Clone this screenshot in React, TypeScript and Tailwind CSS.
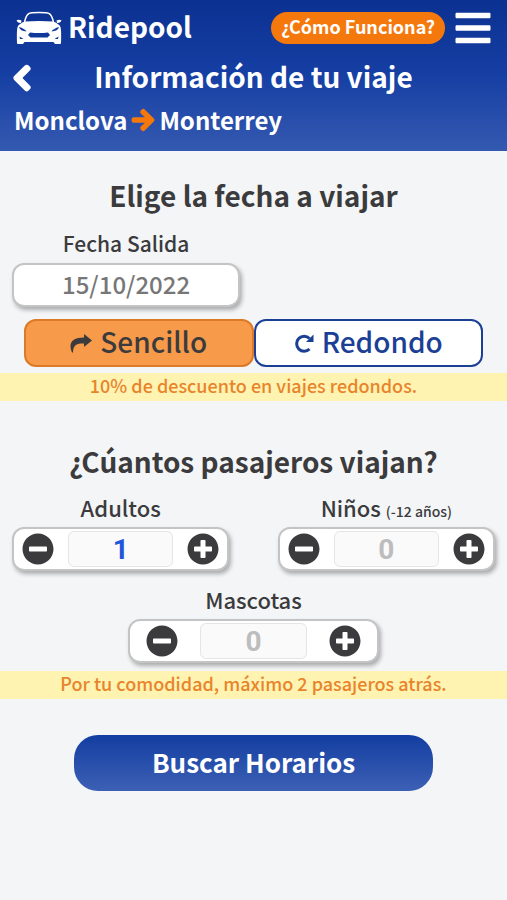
import { useState } from "react";
import { FaArrowRight, FaBars, FaChevronLeft, FaMinusCircle, FaPlusCircle } from "react-icons/fa";

function CarLogo() {
    return (
        <svg viewBox="0 0 46 34" className="h-[34px] w-[46px] shrink-0" fill="none" aria-hidden="true">
            <path d="M8.500 11.500 Q10 4 13 2.500 Q14 1.500 23 1.500 Q32 1.500 33 2.500 Q36 4 37.500 11.500" stroke="#fff" strokeWidth="1.500" />
            <path d="M0.500 9.500 Q2 8 5.500 9.500 L5 12 Q1.500 12 0.500 9.500Z M45.500 9.500 Q44 8 40.500 9.500 L41 12 Q44.500 12 45.500 9.500Z" fill="#fff" />
            <path
                fill="#fff"
                fillRule="evenodd"
                d="M9 10.500 Q23 9.500 37 10.500 Q43 12.500 44.500 16 Q45.500 20 45 32 Q45 33 44 33 H39 L37.500 31 H8.500 L7 33 H2 Q1 33 1 32 Q0.500 20 1.500 16 Q3 12.500 9 10.500Z M3 16 Q4 20 10.500 20.500 Q8.500 17.500 3 16Z M43 16 Q42 20 35.500 20.500 Q37.500 17.500 43 16Z M14 21.500 Q23 22.500 32 21.500 L34 24 L31.500 26.500 H14.500 L12 24Z M3.500 25.500 L4 28 H7.500Z M42.500 25.500 L42 28 H38.500Z"
            />
        </svg>
    );
}

function ShareArrow() {
    return (
        <svg viewBox="0 0 22 20" className="h-5 w-[22px]" fill="currentColor" aria-hidden="true">
            <path d="M14 1 L22 7.500 L14 14 V10.500 C7 10 3 12 3 19.500 H2 C-2 10 2 4.500 14 4.500Z" />
        </svg>
    );
}

function RoundTripArrow() {
    return (
        <svg viewBox="0 0 20 20" className="size-5" fill="none" aria-hidden="true">
            <path d="M15.500 16 A7.500 7.500 0 1 1 15.500 5.500" stroke="currentColor" strokeWidth="3" />
            <path d="M19.500 1.500 V9 H12Z" fill="currentColor" />
        </svg>
    );
}

type CounterProps = {
    id: string;
    label: string;
    note?: string;
    value: number;
    onChange: (value: number) => void;
    wide?: boolean;
};

function Counter({ id, label, note, value, onChange, wide }: CounterProps) {
    return (
        <div className={wide ? "w-[52%]" : "w-[45%]"}>
            <label htmlFor={id} className="mb-1 block text-center text-[22px] leading-8 font-medium">
                {label} {note && <span className="text-sm">{note}</span>}
            </label>
            <div
                className={`flex h-11 items-center justify-between rounded-xl border-2 border-[#c4c4c4] bg-white shadow-[2px_3px_4px_#0000004d] ${
                    wide ? "px-4" : "px-2"
                }`}
            >
                <button type="button" aria-label={`Quitar ${label}`} onClick={() => onChange(Math.max(0, value - 1))}>
                    <FaMinusCircle className="size-8" />
                </button>
                <input
                    id={id}
                    type="text"
                    inputMode="numeric"
                    value={value}
                    onChange={(e) => onChange(Number(e.target.value) || 0)}
                    className={`h-9 rounded-md border border-[#e5e5e5] bg-[#fafafa] text-center font-[Roboto,sans-serif] text-[28px] leading-8 font-bold ${
                        wide ? "w-1/2" : "w-[53%]"
                    } ${value > 0 ? "text-[#1f57dc]" : "text-[#bdbdbd]"}`}
                />
                <button type="button" aria-label={`Agregar ${label}`} onClick={() => onChange(value + 1)}>
                    <FaPlusCircle className="size-8" />
                </button>
            </div>
        </div>
    );
}

export default function App() {
    const [date, setDate] = useState("15/10/2022");
    const [adults, setAdults] = useState(1);
    const [children, setChildren] = useState(0);
    const [pets, setPets] = useState(0);

    return (
        <div className="min-h-screen bg-[#f3f5f7] font-['Noto_Sans_CJK_JP','Noto_Sans',sans-serif] text-[#3b3b3d]">
            <header className="bg-linear-to-b from-[#0b3191] via-[#163fa4] to-[#3459b0] pb-[11px] text-white">
                <div className="flex h-14 items-center gap-2 pr-3.5 pl-4">
                    <a href="#" className="mr-auto flex items-center gap-1.5 text-[28px] leading-9 font-bold">
                        <CarLogo />
                        <span className="pb-1">Ridepool</span>
                    </a>
                    <a
                        href="#"
                        className="flex h-8 items-center rounded-2xl bg-[#f5780c] px-2.5 pb-1 text-lg font-bold whitespace-nowrap"
                    >
                        ¿Cómo Funciona?
                    </a>
                    <button type="button" aria-label="Menú">
                        <FaBars className="size-10" />
                    </button>
                </div>
                <div className="grid h-11 grid-cols-[40px_1fr_40px] items-center">
                    <button type="button" aria-label="Regresar" className="pl-2">
                        <FaChevronLeft className="size-7 stroke-[50]" />
                    </button>
                    <h1 className="pb-1 text-center text-[28px] leading-9 font-bold">Información de tu viaje</h1>
                </div>
                <p className="flex h-10 items-center gap-1 px-3.5 text-2xl font-bold">
                    Monclova
                    <FaArrowRight className="size-6 stroke-[40] text-[#f5780c]" />
                    Monterrey
                </p>
            </header>

            <main>
                <h2 className="pt-6 text-center text-[28px] leading-10 font-bold">Elige la fecha a viajar</h2>
                <div className="mt-3 ml-3 w-[45%]">
                    <label htmlFor="fecha" className="mb-1 block text-center text-[21px] leading-8 font-medium">
                        Fecha Salida
                    </label>
                    <input
                        id="fecha"
                        type="text"
                        value={date}
                        onChange={(e) => setDate(e.target.value)}
                        className="block h-11 w-full rounded-xl border-2 border-[#c4c4c4] bg-white pb-1 text-center text-2xl font-medium text-[#777] shadow-[2px_3px_4px_#0000004d]"
                    />
                </div>
                <div className="mt-3 grid grid-cols-2 px-6 text-[28px] leading-10 font-medium">
                    <button
                        type="button"
                        className="flex h-12 items-center justify-center gap-2 rounded-xl border-2 border-[#dc7a27] bg-[#f79a4a]"
                    >
                        <ShareArrow />
                        <span className="pb-1">Sencillo</span>
                    </button>
                    <button
                        type="button"
                        className="flex h-12 items-center justify-center gap-2 rounded-xl border-2 border-[#1c3f96] bg-white text-[#1c3f96]"
                    >
                        <RoundTripArrow />
                        <span className="pb-1">Redondo</span>
                    </button>
                </div>
                <p className="mt-1.5 bg-[#fef3b0] pb-1 text-center text-lg leading-6 font-medium text-[#e8842c]">
                    10% de descuento en viajes redondos.
                </p>

                <h2 className="mt-10 text-center text-[28px] leading-10 font-bold">¿Cúantos pasajeros viajan?</h2>
                <div className="mt-2.5 flex flex-wrap justify-between gap-y-3 px-3">
                    <Counter id="adultos" label="Adultos" value={adults} onChange={setAdults} />
                    <Counter id="ninos" label="Niños" note="(-12 años)" value={children} onChange={setChildren} />
                    <div className="flex w-full justify-center">
                        <Counter id="mascotas" label="Mascotas" value={pets} onChange={setPets} wide />
                    </div>
                </div>
                <p className="mt-2 bg-[#fef3b0] pb-1 text-center text-lg leading-6 font-medium text-[#e8842c]">
                    Por tu comodidad, máximo 2 pasajeros atrás.
                </p>

                <button
                    type="button"
                    className="mx-auto mt-9 block h-14 w-[71%] rounded-3xl bg-linear-to-b from-[#123da1] to-[#3c60b4] pb-1 text-[26px] font-bold text-white"
                >
                    Buscar Horarios
                </button>
            </main>
        </div>
    );
}
